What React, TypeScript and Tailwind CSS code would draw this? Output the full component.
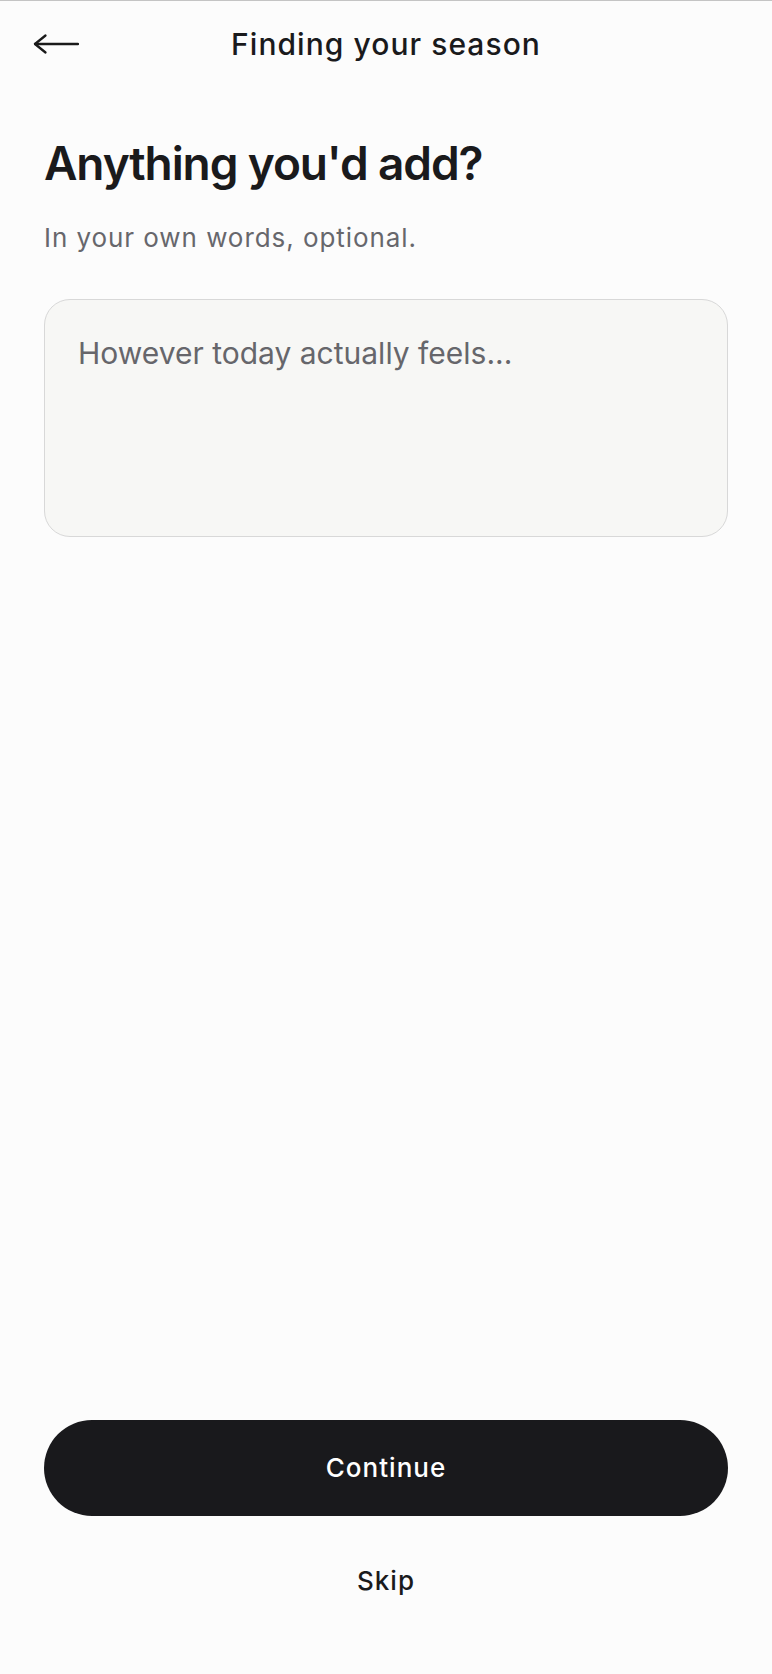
import { useState } from "react";

const BackArrow = () => (
  <svg width="46" height="22" viewBox="0 0 46 22" fill="none" className="text-[#1a1a1a]">
    <path d="M2 11H45" stroke="currentColor" strokeWidth="2.3" strokeLinecap="round" />
    <path d="M12.5 2.5L2 11L12.5 19.5" stroke="currentColor" strokeWidth="2.3" strokeLinecap="round" strokeLinejoin="round" />
  </svg>
);

export default function App() {
  const [note, setNote] = useState("");

  return (
    <div
      className="min-h-screen flex flex-col bg-[#fcfcfc] border-t border-[#c4c4c4] text-[#1a1a1c]"
      style={{ fontFamily: "Inter, 'Noto Sans', sans-serif" }}
    >
      {/* Header */}
      <header className="h-[85px] grid grid-cols-[1fr_auto_1fr] items-center px-[33px] pt-[1px]">
        <button className="justify-self-start flex items-center h-11">
          <BackArrow />
        </button>
        <h1 className="text-[30px] leading-[1.2] font-medium tracking-[0.035em]">Finding your season</h1>
        <div />
      </header>

      {/* Content */}
      <main className="flex-1 flex flex-col px-[44px] pt-[50px]">
        <h2 className="text-[46px] leading-[1.2] font-semibold tracking-[-0.024em]">Anything you'd add?</h2>
        <p className="mt-[29px] text-[26px] leading-[1.4] tracking-[0.036em] text-[#67676c]">In your own words, optional.</p>

        <textarea
          value={note}
          onChange={(e) => setNote(e.target.value)}
          placeholder="However today actually feels..."
          className="mt-[42px] h-[238px] w-full resize-none rounded-[26px] border border-[#d8d8d8] bg-[#f7f7f5] px-[33px] pt-[31px] text-[30px] leading-[1.5] text-[#1a1a1c] placeholder:text-[#66666b] outline-none"
        />
      </main>

      {/* Footer actions */}
      <footer className="flex flex-col items-center px-[44px] pb-[75px]">
        <button className="w-full h-[96px] rounded-full bg-[#19191c] text-white text-[26px] font-medium tracking-[0.04em]">
          Continue
        </button>
        <button className="mt-[47px] text-[26px] leading-[1.4] font-medium tracking-[0.04em] text-[#1a1a1c]">Skip</button>
      </footer>
    </div>
  );
}
